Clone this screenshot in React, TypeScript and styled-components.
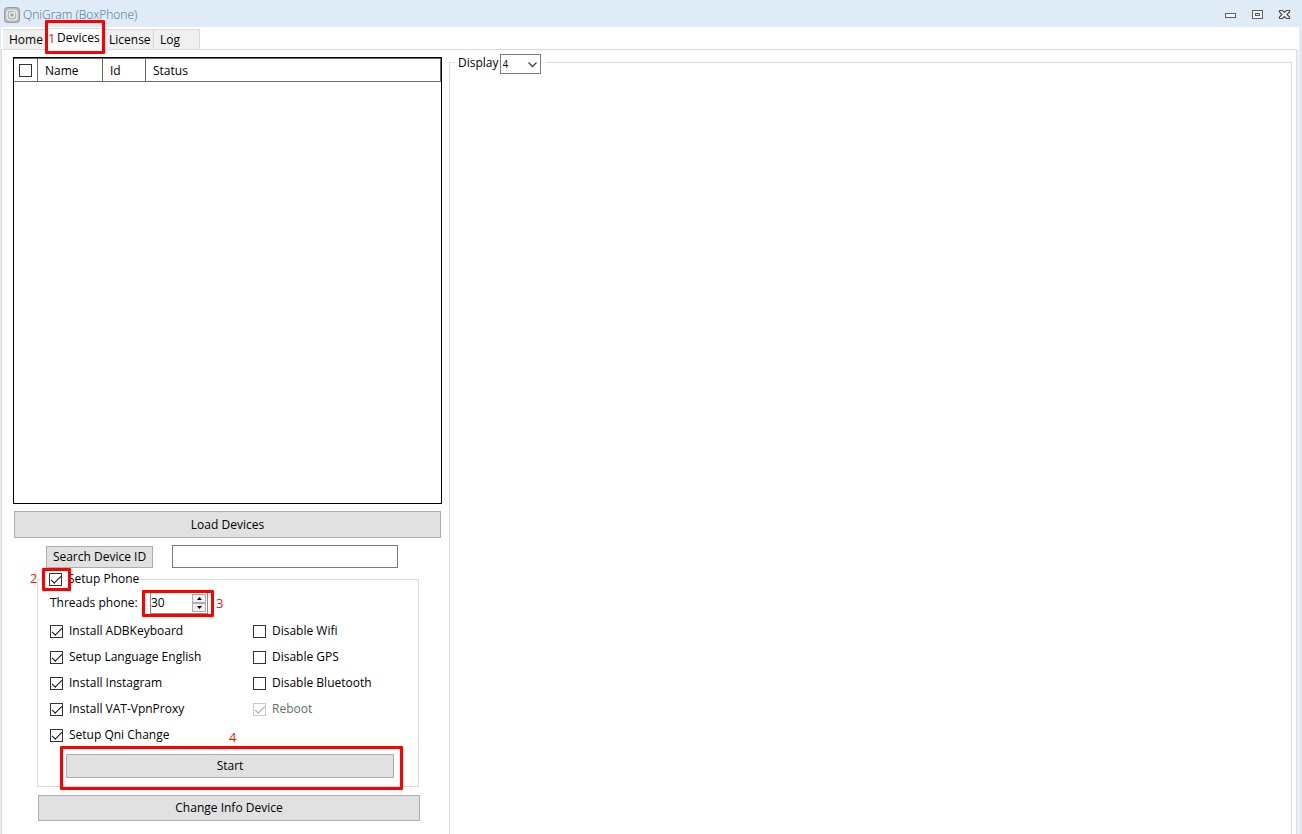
import React from "react";
import styled, { createGlobalStyle, css } from "styled-components";

const GlobalStyle = createGlobalStyle`
  *, *::before, *::after { box-sizing: border-box; }
  body {
    margin: 0;
    background: #dfebf7;
    color: #000;
    font: 12px/18px "Open Sans", "Noto Sans", sans-serif;
  }
  button, input, select { font: inherit; color: inherit; }
`;

const Window = styled.main`
  display: flex;
  flex-direction: column;
  min-height: 100vh;
`;

const TitleBar = styled.header`
  display: flex;
  align-items: center;
  height: 27px;
  padding: 2px 10px 0 4px;
  gap: 3px;
`;

const Title = styled.h1`
  flex: 1;
  margin: 0;
  font-size: 12px;
  font-weight: 300;
  color: #44708c;
`;

const WindowButtons = styled.div`
  display: flex;
  gap: 13px;
`;

const WindowButton = styled.button`
  display: flex;
  padding: 0;
  border: 0;
  background: none;
`;

const Client = styled.div`
  flex: 1;
  display: flex;
  flex-direction: column;
  margin: 0 3px 0 1px;
  background: #fff;
`;

const Tabs = styled.nav`
  display: flex;
  align-items: flex-end;
  height: 22px;
  padding-left: 2px;
`;

const Tab = styled.button<{ $active?: boolean; $width: number }>`
  position: relative;
  width: ${(p) => p.$width}px;
  height: 20px;
  padding: 0 0 0 6px;
  border: 1px solid #d9d9d9;
  border-width: 1px 1px 0 0;
  background: #f0f0f0;
  text-align: left;
  ${(p) =>
    p.$active &&
    css`
      height: 22px;
      margin-bottom: -1px;
      padding: 0 0 4px 10px;
      background: #fff;
      z-index: 1;
    `}
`;

const Panel = styled.section`
  flex: 1;
  display: flex;
  gap: 7px;
  margin-right: 2px;
  padding: 7px 4px 0 11px;
  border: 1px solid #dcdcdc;
  border-bottom: 0;
  box-shadow: 2px 0 #f0f0f0;
`;

const Sidebar = styled.div`
  flex: 0 0 429px;
  display: flex;
  flex-direction: column;
  padding-bottom: 13px;
`;

const DeviceList = styled.div`
  flex: 1;
  min-height: 240px;
  border: 1px solid #000;
`;

const DeviceTable = styled.table`
  width: 100%;
  table-layout: fixed;
  border-collapse: separate;
  border-spacing: 0;
  border-right: 1px solid #696969;
`;

const HeaderCell = styled.th<{ $width?: number }>`
  width: ${(p) => (p.$width ? `${p.$width}px` : "auto")};
  height: 24px;
  padding: 2px 0 0 7px;
  border: 1px solid #696969;
  border-width: 1px 1px 1px 0;
  font-weight: 400;
  text-align: left;
  &:first-child { padding: 0 0 0 5px; }
  &:last-child { border-right: 0; }
`;

const Tick = styled.input`
  appearance: none;
  flex: none;
  display: block;
  width: 13px;
  height: 13px;
  margin: 0;
  border: 1px solid #333;
  background: #fff;
  &:checked::before {
    content: "";
    display: block;
    width: 10px;
    height: 5px;
    margin: 2px 0 0 1px;
    border: solid #111;
    border-width: 0 0 1px 1px;
    transform: rotate(-45deg);
  }
  &:disabled { border-color: #c3cfca; }
  &:disabled::before { border-color: #a0a8a4; }
`;

const PushButton = styled.button`
  height: 26px;
  padding: 0 8px;
  border: 1px solid #adadad;
  background: #e1e1e1;
  line-height: 18px;
`;

const LoadButton = styled(PushButton)`
  height: 27px;
  margin: 7px 1px;
`;

const SearchRow = styled.form`
  display: flex;
  align-items: center;
  gap: 19px;
  padding-left: 33px;
`;

const SearchButton = styled(PushButton)`
  width: 107px;
  height: 22px;
  padding: 0;
`;

const SearchInput = styled.input`
  width: 226px;
  height: 23px;
  padding: 0 4px;
  border: 1px solid #7a7a7a;
  background: #fff;
`;

const Group = styled.fieldset`
  min-width: 0;
  margin: 0;
  border: 1px solid #dcdcdc;
`;

const SetupGroup = styled(Group)`
  margin: 2px 23px 0 24px;
  padding: 0 0 8px;
`;

const SetupLegend = styled.legend`
  margin-left: 7px;
  padding: 0 0 0 4px;
`;

const CheckLabel = styled.label<{ $muted?: boolean }>`
  display: flex;
  align-items: center;
  gap: 6px;
  color: ${(p) => (p.$muted ? "#5b7465" : "inherit")};
`;

const Marked = styled.span`
  position: relative;
  display: flex;
`;

const ThreadsRow = styled.div`
  display: flex;
  align-items: center;
  height: 30px;
  padding-left: 12px;
`;

const ThreadsLabel = styled.label`
  width: 100px;
`;

const Spinner = styled.span`
  position: relative;
  display: flex;
  align-items: center;
  width: 58px;
  height: 22px;
  border: 1px solid #8a8a8a;
`;

const SpinnerInput = styled.input`
  flex: 1;
  min-width: 0;
  padding: 0 0 1px;
  border: 0;
  background: none;
  outline: 0;
  appearance: textfield;
  &::-webkit-inner-spin-button { appearance: none; }
`;

const SpinnerButtons = styled.span`
  display: flex;
  flex-direction: column;
  margin-right: 1px;
`;

const StepButton = styled.button`
  display: flex;
  align-items: center;
  justify-content: center;
  width: 14px;
  height: 9px;
  padding: 0;
  border: 1px solid #adadad;
  background: #f0f0f0;
`;

const Options = styled.div`
  display: grid;
  grid-template-columns: 203px 1fr;
  grid-template-rows: repeat(5, 26px);
  grid-auto-flow: column;
  padding-left: 12px;
`;

const StartRow = styled.div`
  position: relative;
  display: flex;
  margin: 6px 24px 0 28px;
`;

const StartButton = styled(PushButton)`
  flex: 1;
  height: 24px;
`;

const ChangeButton = styled(PushButton)`
  margin: 8px 22px 0 25px;
`;

const Highlight = styled.span<{ $inset: string }>`
  position: absolute;
  inset: ${(p) => p.$inset};
  border: 3px solid #f00;
  border-radius: 1px;
  pointer-events: none;
`;

const StepNumber = styled.span<{ $left: number; $top: number }>`
  position: absolute;
  left: ${(p) => p.$left}px;
  top: ${(p) => p.$top}px;
  color: #f01400;
  font-size: 13px;
  line-height: 18px;
`;

const DisplayGroup = styled(Group)`
  flex: 1;
  margin-top: -3px;
  padding: 0;
  border-bottom: 0;
`;

const DisplayLegend = styled.legend`
  margin-left: 5px;
  padding: 0 5px 0 3px;
`;

const DisplayLabel = styled.label`
  display: flex;
  align-items: flex-start;
  gap: 1px;
  height: 17px;
  line-height: 17px;
`;

const SelectBox = styled.span`
  position: relative;
  display: flex;
  svg {
    position: absolute;
    right: 4px;
    top: 8px;
    pointer-events: none;
  }
`;

const Select = styled.select`
  appearance: none;
  width: 41px;
  height: 20px;
  padding: 0 2px;
  border: 1px solid #7a7a7a;
  border-radius: 0;
  background: #fff;
  font-size: 10px;
`;

const leftOptions = [
  "Install ADBKeyboard",
  "Setup Language English",
  "Install Instagram",
  "Install VAT-VpnProxy",
  "Setup Qni Change",
];
const rightOptions = ["Disable Wifi", "Disable GPS", "Disable Bluetooth"];

const AppIcon = () => (
  <svg width="16" height="16" viewBox="0 0 16 16" fill="none" aria-hidden="true">
    <rect x="0.5" y="0.5" width="15" height="15" rx="3" fill="#b4bab9" stroke="#969d9c" />
    <rect x="3" y="3" width="10" height="10" rx="3" stroke="#f4f6f6" strokeWidth="1.2" />
    <circle cx="8" cy="8" r="2.4" fill="#9aa2a1" stroke="#f4f6f6" strokeWidth="1.2" />
    <circle cx="11" cy="5" r="0.7" fill="#fff" />
  </svg>
);

export default function App() {
  return (
    <>
      <GlobalStyle />
      <Window>
        <TitleBar>
          <AppIcon />
          <Title>QniGram (BoxPhone)</Title>
          <WindowButtons>
            <WindowButton aria-label="Minimize">
              <svg width="14" height="12" viewBox="0 0 14 12">
                <rect x="1.5" y="4.5" width="10" height="4" fill="#f5f5f5" stroke="#5c5f66" />
              </svg>
            </WindowButton>
            <WindowButton aria-label="Maximize">
              <svg width="14" height="12" viewBox="0 0 14 12">
                <rect x="1.5" y="1.5" width="10" height="8" fill="#f5f5f5" stroke="#5c5f66" />
                <rect x="4.5" y="4.5" width="4" height="2" fill="#dfebf7" stroke="#5c5f66" />
              </svg>
            </WindowButton>
            <WindowButton aria-label="Close">
              <svg width="14" height="12" viewBox="0 0 14 12">
                <path
                  d="M1.5 1.5h3l2 2 2-2h3v1.500l-2.500 2.500 2.500 2.500v1.500h-3l-2-2-2 2h-3v-1.500l2.500-2.500-2.500-2.500z"
                  fill="#f5f5f5"
                  stroke="#4a4d54"
                  strokeWidth="1.2"
                />
              </svg>
            </WindowButton>
          </WindowButtons>
        </TitleBar>

        <Client>
          <Tabs>
            <Tab $width={44}>Home</Tab>
            <Tab $width={56} $active>
              Devices
              <Highlight $inset="-9px -3px -4px -2px" />
              <StepNumber $left={1} $top={0}>1</StepNumber>
            </Tab>
            <Tab $width={51}>License</Tab>
            <Tab $width={46}>Log</Tab>
          </Tabs>

          <Panel>
            <Sidebar>
              <DeviceList>
                <DeviceTable>
                  <thead>
                    <tr>
                      <HeaderCell $width={24}>
                        <Tick type="checkbox" aria-label="Select all devices" />
                      </HeaderCell>
                      <HeaderCell $width={65}>Name</HeaderCell>
                      <HeaderCell $width={43}>Id</HeaderCell>
                      <HeaderCell>Status</HeaderCell>
                    </tr>
                  </thead>
                </DeviceTable>
              </DeviceList>
              <LoadButton>Load Devices</LoadButton>
              <SearchRow onSubmit={(e) => e.preventDefault()}>
                <SearchButton>Search Device ID</SearchButton>
                <SearchInput type="text" aria-label="Device ID" />
              </SearchRow>

              <SetupGroup>
                <SetupLegend>
                  <CheckLabel>
                    <Marked>
                      <Tick type="checkbox" defaultChecked />
                      <Highlight $inset="-5px -9px -5px -7px" />
                      <StepNumber $left={-19} $top={-4}>2</StepNumber>
                    </Marked>
                    Setup Phone
                  </CheckLabel>
                </SetupLegend>
                <ThreadsRow>
                  <ThreadsLabel htmlFor="threads">Threads phone:</ThreadsLabel>
                  <Spinner>
                    <SpinnerInput id="threads" type="number" defaultValue={30} />
                    <SpinnerButtons>
                      <StepButton aria-label="More threads">
                        <svg width="5" height="3"><path d="M0 3h5L2.500 0z" /></svg>
                      </StepButton>
                      <StepButton aria-label="Fewer threads">
                        <svg width="5" height="3"><path d="M0 0h5L2.500 3z" /></svg>
                      </StepButton>
                    </SpinnerButtons>
                    <Highlight $inset="-3px -7px -4px -9px" />
                    <StepNumber $left={65} $top={1}>3</StepNumber>
                  </Spinner>
                </ThreadsRow>
                <Options>
                  {leftOptions.map((name) => (
                    <CheckLabel key={name}>
                      <Tick type="checkbox" defaultChecked />
                      {name}
                    </CheckLabel>
                  ))}
                  {rightOptions.map((name) => (
                    <CheckLabel key={name}>
                      <Tick type="checkbox" />
                      {name}
                    </CheckLabel>
                  ))}
                  <CheckLabel $muted>
                    <Tick type="checkbox" defaultChecked disabled />
                    Reboot
                  </CheckLabel>
                </Options>
                <StartRow>
                  <StartButton>Start</StartButton>
                  <Highlight $inset="-8px -9px -12px -6px" />
                  <StepNumber $left={163} $top={-26}>4</StepNumber>
                </StartRow>
              </SetupGroup>
              <ChangeButton>Change Info Device</ChangeButton>
            </Sidebar>

            <DisplayGroup>
              <DisplayLegend>
                <DisplayLabel>
                  Display
                  <SelectBox>
                    <Select defaultValue="4">
                      <option>4</option>
                    </Select>
                    <svg width="9" height="6" fill="none" stroke="#444">
                      <path d="M0.500 0.500l4 4 4-4" strokeWidth="1.3" />
                    </svg>
                  </SelectBox>
                </DisplayLabel>
              </DisplayLegend>
            </DisplayGroup>
          </Panel>
        </Client>
      </Window>
    </>
  );
}
